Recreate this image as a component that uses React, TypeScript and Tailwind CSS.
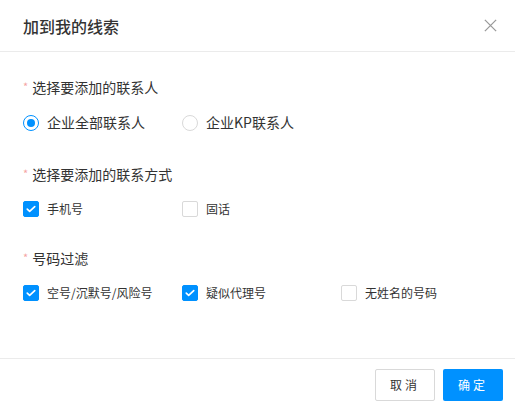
const font = { fontFamily: '"Noto Sans CJK SC", "Noto Sans", sans-serif' };

function Radio({ checked, label }: { checked?: boolean; label: string }) {
  return (
    <label className="flex items-center gap-2 text-[14px] text-[#333]">
      <span
        className={`flex h-4 w-4 items-center justify-center rounded-full border bg-white ${
          checked ? "border-[#0091ff]" : "border-[#d9d9d9]"
        }`}
      >
        {checked ? <span className="h-2 w-2 rounded-full bg-[#0091ff]" /> : null}
      </span>
      {label}
    </label>
  );
}

function Checkbox({ checked, label }: { checked?: boolean; label: string }) {
  return (
    <label className="flex items-center gap-2 text-[12px] text-[#333]">
      <span
        className={`flex h-4 w-4 items-center justify-center rounded-[2px] border ${
          checked ? "border-[#0091ff] bg-[#0091ff]" : "border-[#d9d9d9] bg-white"
        }`}
      >
        {checked ? (
          <svg viewBox="0 0 16 16" className="h-3 w-3">
            <path
              d="M3 8.2l3.2 3L13 4.8"
              fill="none"
              stroke="white"
              strokeWidth="2.2"
              strokeLinecap="round"
              strokeLinejoin="round"
            />
          </svg>
        ) : null}
      </span>
      {label}
    </label>
  );
}

function Label({ text }: { text: string }) {
  return (
    <div className="flex h-5 items-center text-[14px] text-[#333]">
      <span className="mr-[4px] mt-[-2px] text-[11px] text-[#f5a3a3]">*</span>
      {text}
    </div>
  );
}

export default function App() {
  return (
    <div className="h-[409px] w-[515px] bg-white" style={font}>
      <div className="flex h-[52px] items-center justify-between border-b border-[#ebebeb] pl-[23px] pr-[17px]">
        <h1 className="text-[16px] font-medium text-[#333]">加到我的线索</h1>
        <svg viewBox="0 0 16 16" className="h-[15px] w-[15px] text-[#999]">
          <path
            d="M2 2l12 12M14 2L2 14"
            fill="none"
            stroke="currentColor"
            strokeWidth="1.4"
          />
        </svg>
      </div>

      <div className="h-[306px] px-[23px] pt-[25px]">
        <Label text="选择要添加的联系人" />
        <div className="mt-[15px] flex">
          <div className="w-[159px] shrink-0">
            <Radio checked label="企业全部联系人" />
          </div>
          <div className="w-[159px] shrink-0">
            <Radio label="企业KP联系人" />
          </div>
        </div>

        <div className="mt-[31px]">
          <Label text="选择要添加的联系方式" />
        </div>
        <div className="mt-4 flex">
          <div className="w-[159px] shrink-0">
            <Checkbox checked label="手机号" />
          </div>
          <div className="w-[159px] shrink-0">
            <Checkbox label="固话" />
          </div>
        </div>

        <div className="mt-[30px]">
          <Label text="号码过滤" />
        </div>
        <div className="mt-4 flex">
          <div className="w-[159px] shrink-0">
            <Checkbox checked label="空号/沉默号/风险号" />
          </div>
          <div className="w-[159px] shrink-0">
            <Checkbox checked label="疑似代理号" />
          </div>
          <div className="w-[159px] shrink-0">
            <Checkbox label="无姓名的号码" />
          </div>
        </div>
      </div>

      <div className="flex justify-end gap-2 border-t border-[#ebebeb] pr-3 pt-[10px]">
        <button className="h-8 w-[60px] rounded-[2px] border border-[#d9d9d9] bg-white text-[12px] tracking-[3px] text-[#333]">
          取消
        </button>
        <button className="h-8 w-[60px] rounded-[2px] bg-[#0091ff] text-[12px] tracking-[3px] text-white">
          确定
        </button>
      </div>
    </div>
  );
}
